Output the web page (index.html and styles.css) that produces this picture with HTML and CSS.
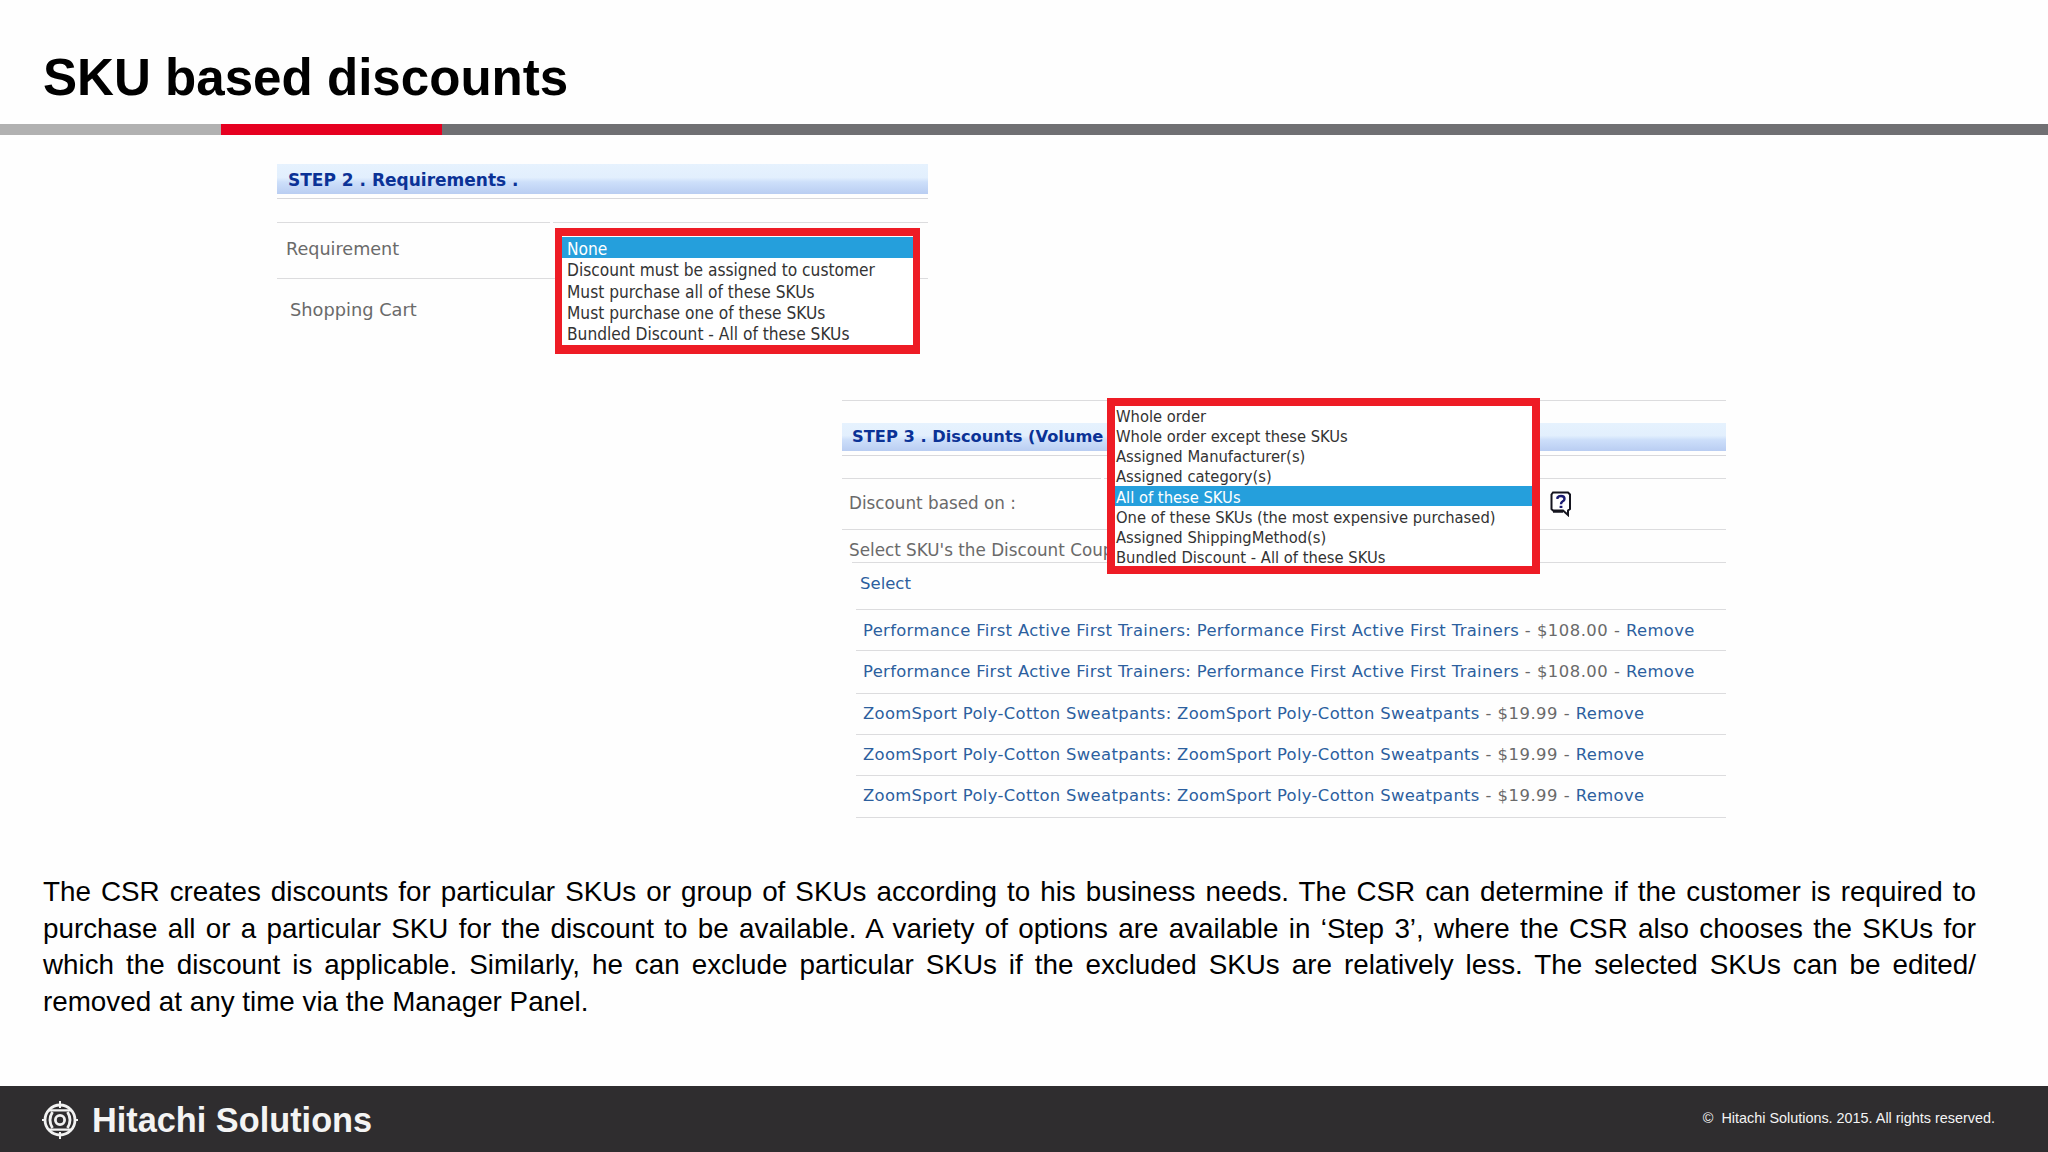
FILE: index.html
```
<!DOCTYPE html>
<html lang="en">
<head>
    <meta charset="UTF-8">
    <meta name="viewport" content="width=device-width, initial-scale=1.0">
    <title>SKU based discounts</title>
    <link rel="stylesheet" href="styles.css">
</head>
<body>
    <header class="header">
        <h1>SKU based discounts</h1>
    </header>
    <div class="stripe">
        <div class="stripe-light"></div>
        <div class="stripe-red"></div>
        <div class="stripe-dark"></div>
    </div>

    <main>
        <!-- Step 2 -->
        <section class="panel step2">
            <h2>STEP 2 . Requirements .</h2>
            <div class="rule"></div>
            <div class="split"><div></div><div></div></div>
            <div class="row requirement">Requirement</div>
            <div class="row cart">Shopping Cart</div>
            <ul class="dropdown">
                <li class="selected">None</li>
                <li>Discount must be assigned to customer</li>
                <li>Must purchase all of these SKUs</li>
                <li>Must purchase one of these SKUs</li>
                <li>Bundled Discount - All of these SKUs</li>
            </ul>
        </section>

        <!-- Step 3 -->
        <section class="panel step3">
            <h2>STEP 3 . Discounts (Volume</h2>
            <div class="rule"></div>
            <div class="split"><div></div><div></div></div>
            <div class="row based">
                <span>Discount based on :</span>
                <svg class="help" width="22" height="26" viewBox="0 0 22 26">
                    <path d="M3 1.5H18L20 3.5V18L18 19.5V24L13 19.5H3L1.5 18V3.5Z" fill="#fff" stroke="#15151f" stroke-width="2"/>
                    <path d="M3 20.5H13" stroke="#15151f" stroke-width="2.5"/>
                    <path d="M7.5 8V6.5Q8.5 5 11 5Q14.5 5 14.5 8Q14.5 9.5 12.5 10.5Q11 11.3 11 13.2" fill="none" stroke="#1a1a70" stroke-width="2.4"/>
                    <path d="M9.6 14.8H12.4V17H9.6Z" fill="#1a1a70"/>
                </svg>
            </div>
            <div class="coupon">Select SKU's the Discount Coup</div>
            <div class="select"><a>Select</a></div>
            <ul class="skus">
                <li><a>Performance First Active First Trainers: Performance First Active First Trainers</a> - $108.00 - <a>Remove</a></li>
                <li><a>Performance First Active First Trainers: Performance First Active First Trainers</a> - $108.00 - <a>Remove</a></li>
                <li><a>ZoomSport Poly-Cotton Sweatpants: ZoomSport Poly-Cotton Sweatpants</a> - $19.99 - <a>Remove</a></li>
                <li><a>ZoomSport Poly-Cotton Sweatpants: ZoomSport Poly-Cotton Sweatpants</a> - $19.99 - <a>Remove</a></li>
                <li><a>ZoomSport Poly-Cotton Sweatpants: ZoomSport Poly-Cotton Sweatpants</a> - $19.99 - <a>Remove</a></li>
            </ul>
            <ul class="dropdown">
                <li>Whole order</li>
                <li>Whole order except these SKUs</li>
                <li>Assigned Manufacturer(s)</li>
                <li>Assigned category(s)</li>
                <li class="selected">All of these SKUs</li>
                <li>One of these SKUs (the most expensive purchased)</li>
                <li>Assigned ShippingMethod(s)</li>
                <li>Bundled Discount - All of these SKUs</li>
            </ul>
        </section>

        <p class="description">
            <span>The CSR creates discounts for particular SKUs or group of SKUs according to his business needs. The CSR can determine if the customer is required to</span>
            <span>purchase all or a particular SKU for the discount to be available. A variety of options are available in ‘Step 3’, where the CSR also chooses the SKUs for</span>
            <span>which the discount is applicable. Similarly, he can exclude particular SKUs if the excluded SKUs are relatively less. The selected SKUs can be edited/</span>
            <span>removed at any time via the Manager Panel.</span>
        </p>
    </main>

    <footer>
        <div class="brand">
            <svg width="36" height="38" viewBox="-18 -19 36 38" fill="none" stroke="#f2f2f2">
                <circle r="15" stroke-width="2.8"/>
                <path d="M0 -19V-12M0 12V19M-18 0H-14M14 0H18" stroke-width="2"/>
                <path d="M-11 -9.6H11M-11 9.6H11" stroke-width="2.2"/>
                <path d="M-7.5 -8Q-12.5 0 -7.5 8M7.5 -8Q12.5 0 7.5 8" stroke-width="2.8"/>
                <circle r="4.6" stroke-width="2.8"/>
            </svg>
            <span>Hitachi Solutions</span>
        </div>
        <div class="copyright">©&nbsp; Hitachi Solutions. 2015. All rights reserved.</div>
    </footer>
</body>
</html>
```
FILE: styles.css
```
/* Global Styles */
* {
    box-sizing: border-box;
}

body {
    font-family: 'Liberation Sans', Arial, sans-serif;
    margin: 0;
    height: 1152px;
    display: flex;
    flex-direction: column;
    background: #fefefe;
    color: #000;
    overflow: hidden;
}

ul {
    list-style: none;
    margin: 0;
    padding: 0;
}

/* Header */
.header {
    height: 124px;
    padding: 31px 0 0 43px;
    display: flex;
    align-items: center;
}

h1 {
    font-size: 51.1px;
    font-weight: 700;
    margin: 0;
}

.stripe {
    display: flex;
    height: 11px;
}

.stripe-light {
    width: 221px;
    background: #b1b1b1;
}

.stripe-red {
    width: 221px;
    background: #e60020;
}

.stripe-dark {
    flex: 1;
    background: #707073;
}

/* Panels */
main {
    flex: 1;
    padding-top: 29px;
}

.panel {
    position: relative;
    font-family: 'DejaVu Sans', Verdana, sans-serif;
    color: #6a6a6a;
}

.panel h2 {
    display: flex;
    align-items: center;
    margin: 0;
    color: #0b3296;
    background: linear-gradient(#e6f2fe, #e2effd 45%, #cddffa 60%, #b9cdf2);
    white-space: nowrap;
}

.panel a {
    color: #2c5f9e;
}

.rule {
    height: 5px;
    border-bottom: 1px solid #d8d8dc;
}

.split {
    display: grid;
    gap: 3px;
}

.split div {
    border-bottom: 1px solid #dcdcde;
}

.row {
    display: flex;
    align-items: center;
}

/* Step 2 */
.step2 {
    width: 651px;
    height: 236px;
    margin-left: 277px;
}

.step2 h2 {
    height: 30px;
    padding: 1px 0 0 11px;
    font-size: 17px;
}

.step2 .split {
    height: 24px;
    grid-template-columns: 273px 1fr;
}

.requirement {
    height: 56px;
    padding: 0 0 3px 9px;
    font-size: 17.6px;
    border-bottom: 1px solid #dcdcde;
}

.cart {
    height: 64px;
    padding: 0 0 4px 13px;
    font-size: 17.8px;
}

/* Step 3 */
.step3 {
    width: 884px;
    margin-left: 842px;
    padding-top: 22px;
    border-top: 1px solid #dcdcde;
    font-size: 16.8px;
}

.step3 h2 {
    height: 28px;
    padding: 0 0 2px 10px;
    font-size: 16.25px;
}

.step3 .split {
    height: 23px;
    grid-template-columns: 259px 1fr;
}

.based {
    height: 51px;
    padding: 0 154px 3px 7px;
    justify-content: space-between;
    border-bottom: 1px solid #dcdcde;
}

.help {
    margin-top: 3px;
}

.coupon {
    height: 32px;
    padding: 9px 0 0 7px;
    line-height: 22px;
}

.select {
    height: 47px;
    margin-left: 10px;
    padding: 10px 0 0 8px;
    line-height: 21px;
    font-size: 16.5px;
    border-top: 1px solid #dcdcde;
}

.skus {
    display: grid;
    grid-template-rows: 41px 43px 41px 41px 42px;
    margin-left: 14px;
    border-top: 1px solid #dcdcde;
    font-size: 16.4px;
    letter-spacing: 0.5px;
}

.skus li {
    padding: 10px 0 0 7px;
    line-height: 22px;
    white-space: nowrap;
    border-bottom: 1px solid #dcdcde;
}

.skus li:nth-child(n+3) {
    padding-top: 9px;
}

.skus a {
    letter-spacing: 0.34px;
}

/* Dropdown lists */
.dropdown {
    position: absolute;
    background: #fff;
    color: #333;
    font-family: 'DejaVu Sans Condensed', 'DejaVu Sans', Tahoma, sans-serif;
    font-stretch: condensed;
    border: 8px solid #ee1c25;
    white-space: nowrap;
}

.dropdown .selected {
    background: #259fdc;
    color: #fff;
}

.step2 .dropdown {
    top: 64px;
    left: 278px;
    width: 365px;
    height: 126px;
    padding-top: 1px;
    border-width: 8px 7px 9px;
    font-size: 17.2px;
    line-height: 18px;
}

.step2 .dropdown li {
    padding: 3.2px 0 0 5px;
}

.step3 .dropdown {
    top: -3px;
    left: 265px;
    width: 433px;
    height: 176px;
    font-size: 16.4px;
    line-height: 17.9px;
}

.step3 .dropdown li {
    padding: 2.2px 0 0 1px;
}

/* Description */
.description {
    width: 1933px;
    margin: 56px 0 0 43px;
    font-size: 27.8px;
    line-height: 36.6px;
}

.description span {
    display: block;
    white-space: nowrap;
    text-align: justify;
    text-align-last: justify;
}

.description span:last-child {
    text-align-last: left;
}

/* Footer */
footer {
    height: 66px;
    padding: 2px 53px 0 42px;
    display: flex;
    align-items: center;
    justify-content: space-between;
    background: #2f2d2f;
    color: #f4f4f4;
}

.brand {
    display: flex;
    align-items: center;
    gap: 14px;
    font-size: 34.3px;
    font-weight: 700;
}

.copyright {
    font-size: 14.4px;
    padding-bottom: 5px;
}
```
